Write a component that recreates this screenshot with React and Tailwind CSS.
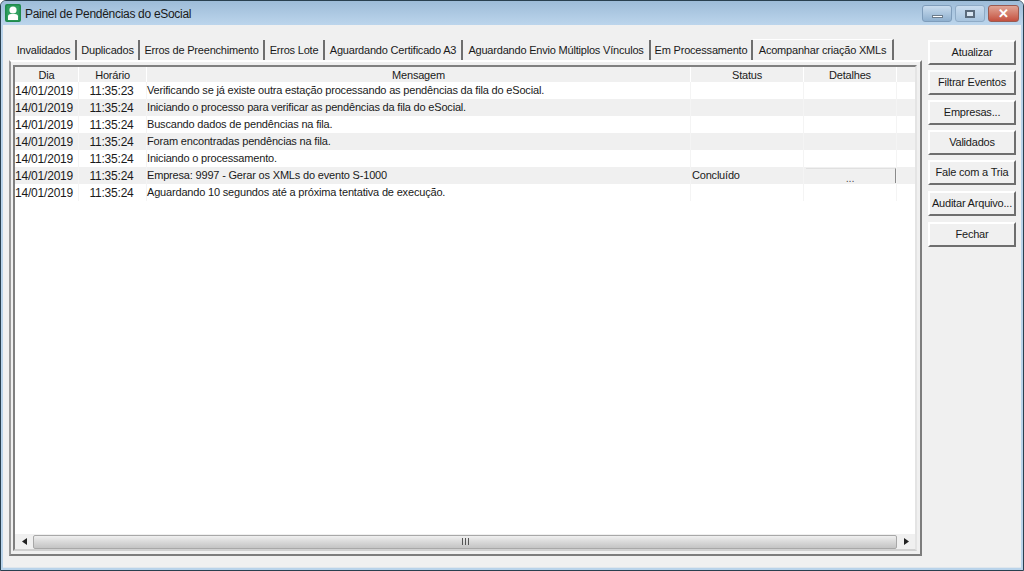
const tabs = [
  ["Invalidados", "w-[65px]"],
  ["Duplicados", "w-[63px]"],
  ["Erros de Preenchimento", "w-[125px]"],
  ["Erros Lote", "w-[60px]"],
  ["Aguardando Certificado A3", "w-[138px]"],
  ["Aguardando Envio Múltiplos Vínculos", "w-[188px]"],
  ["Em Processamento", "w-[102px]"],
];
const rows = [
  ["14/01/2019", "11:35:23", "Verificando se já existe outra estação processando as pendências da fila do eSocial.", ""],
  ["14/01/2019", "11:35:24", "Iniciando o processo para verificar as pendências da fila do eSocial.", ""],
  ["14/01/2019", "11:35:24", "Buscando dados de pendências na fila.", ""],
  ["14/01/2019", "11:35:24", "Foram encontradas pendências na fila.", ""],
  ["14/01/2019", "11:35:24", "Iniciando o processamento.", ""],
  ["14/01/2019", "11:35:24", "Empresa: 9997 - Gerar os XMLs do evento S-1000", "Concluído", true],
  ["14/01/2019", "11:35:24", "Aguardando 10 segundos até a próxima tentativa de execução.", ""],
];
const buttons = ["Atualizar", "Filtrar Eventos", "Empresas...", "Validados", "Fale com a Tria", "Auditar Arquivo...", "Fechar"];

function AppIcon() {
  return (
    <svg width="16" height="18" viewBox="0 0 16 18">
      <rect x="0" y="0" width="16" height="18" rx="2" fill="#1f8a4c" />
      <rect x="1.5" y="1.5" width="13" height="15" rx="1" fill="#2f9e5f" />
      <circle cx="8" cy="6" r="3.6" fill="#ffffff" />
      <path d="M3 16 V12.5 Q3 10 6 10 H10 Q13 10 13 12.5 V16 Z" fill="#ffffff" />
    </svg>
  );
}

export default function App() {
  return (
    <div className="w-[1024px] h-[571px] overflow-hidden flex flex-col border border-[#29404f] rounded-t-[6px] bg-[#b9d3ea] font-['Liberation_Sans',sans-serif] text-[11px] text-[#1a1a1a] tracking-[-0.2px]">
      <div className="h-[24px] shrink-0 flex items-center bg-gradient-to-b from-[#9dbcd8] to-[#bcd5ec] pl-[4px] pr-[4px]">
        <AppIcon />
        <span className="ml-[4px] mt-[1px] text-[12px] tracking-[-0.3px]">Painel de Pendências do eSocial</span>
        <div className="ml-auto flex h-[17px] self-start mt-[4px] gap-[3px]">
          <div className="w-[30px] flex items-end justify-center pb-[3px] rounded-[3px] border border-[#7f9dbb] bg-gradient-to-b from-[#c9dcee] to-[#8fb0cf]">
            <div className="w-[11px] h-[3px] bg-white border border-[#6b7b8b]" />
          </div>
          <div className="w-[30px] flex items-center justify-center rounded-[3px] border border-[#8fabc6] bg-gradient-to-b from-[#c9dcee] to-[#a8c4de]">
            <div className="w-[10px] h-[8px] border-2 border-[#5b6b7b] bg-[#d9e6f2]" />
          </div>
          <div className="w-[31px] flex items-center justify-center rounded-[3px] border border-[#9a5a50] bg-gradient-to-b from-[#dfa596] to-[#c4503f]">
            <span className="text-white text-[13px] font-bold leading-none">✕</span>
          </div>
        </div>
      </div>
      <div className="flex-1 mx-[2px] mb-[2px] bg-[#f0f0f0] flex pl-[6px] pt-[15px] pb-[11px] border-b border-[#dfe6ec]">
        <div className="w-[913px] flex flex-col shrink-0">
          <div className="h-[20px] flex pl-[3px] shrink-0">
            {tabs.map(([t, w]) => (
              <div key={t} className={`${w} shrink-0 flex items-center justify-center whitespace-nowrap h-[20px] pt-[1px] border-r-2 border-[#6e6e6e]`}>{t}</div>
            ))}
            <div className="w-[141px] h-[21px] -mt-[1px] shrink-0 flex items-center justify-center whitespace-nowrap border-r-2 border-[#6e6e6e] border-t border-t-white">Acompanhar criação XMLs</div>
          </div>
          <div className="flex-1 flex flex-col border-2 border-t-white border-l-[#9a9a9a] border-r-[#7d7d7d] border-b-[#7d7d7d] pt-[3px] pb-[3px] pl-[2px] pr-[3px]">
            <div className="flex-1 flex flex-col bg-white border-2 border-t-[#808080] border-l-[#808080] border-r-[#e4e4e4] border-b-[#d0d0d0] overflow-hidden">
              <div className="flex h-[15px] pt-[1px] bg-[#f0f0f0] items-center shrink-0 text-center">
                <div className="w-[64px] border-r border-white">Dia</div>
                <div className="w-[68px] border-r border-white">Horário</div>
                <div className="w-[544px] border-r border-white">Mensagem</div>
                <div className="w-[113px] border-r border-white">Status</div>
                <div className="w-[93px] border-r border-white">Detalhes</div>
                <div className="flex-1" />
              </div>
              <div className="flex-1">
                {rows.map((r, i) => (
                  <div key={i} className={`flex h-[17px] items-center ${i % 2 ? "bg-[#f0f0f0]" : "bg-white"}`}>
                    <div className="w-[64px] h-full flex items-center text-[12px] border-r border-[#f4f4f4]">{r[0]}</div>
                    <div className="w-[68px] h-full flex items-center justify-center pr-[2px] text-[12px] border-r border-[#f4f4f4]">{r[1]}</div>
                    <div className="w-[544px] h-full flex items-center tracking-[-0.18px] border-r border-[#f4f4f4]">{r[2]}</div>
                    <div className="w-[113px] h-full flex items-center pl-[1px] border-r border-[#f4f4f4]">{r[3]}</div>
                    <div className="w-[93px] h-full flex items-center justify-center border-r border-[#f4f4f4]">
                      {r[4] ? <div className="w-[90px] h-[15px] ml-[1px] flex items-end justify-center leading-[10px] border-r border-[#8a8a8a] border-t border-t-[#e0e0e0] text-[#555]">...</div> : null}
                    </div>
                  </div>
                ))}
              </div>
              <div className="h-[15px] shrink-0 flex items-center bg-[#f0f0f0]">
                <div className="w-[18px] flex justify-center">
                  <svg width="5" height="7" viewBox="0 0 5 7"><path d="M5 0 L0 3.5 L5 7 Z" fill="#222" /></svg>
                </div>
                <div className="flex-1 h-[14px] flex items-center justify-center rounded-[2px] border border-[#a8a8a8] bg-gradient-to-b from-[#f0f0f0] via-[#d8d8d8] to-[#c4c4c4]">
                  <div className="flex gap-[1px]">
                    <div className="w-[1px] h-[7px] bg-[#555]" />
                    <div className="w-[1px] h-[7px] ml-[1px] bg-[#555]" />
                    <div className="w-[1px] h-[7px] ml-[1px] bg-[#555]" />
                  </div>
                </div>
                <div className="w-[18px] flex justify-center">
                  <svg width="5" height="7" viewBox="0 0 5 7"><path d="M0 0 L5 3.5 L0 7 Z" fill="#222" /></svg>
                </div>
              </div>
            </div>
          </div>
        </div>
        <div className="w-[88px] ml-[6px] flex flex-col gap-[5px] shrink-0">
          {buttons.map((b, i) => (
            <div key={b} className={`h-[25px] flex items-center justify-center bg-[#f0f0f0] border-2 border-white border-r-[#6e6e6e] border-b-[#6e6e6e] whitespace-nowrap ${i > 4 ? "mt-[1px]" : ""}`}>{b}</div>
          ))}
        </div>
      </div>
    </div>
  );
}
